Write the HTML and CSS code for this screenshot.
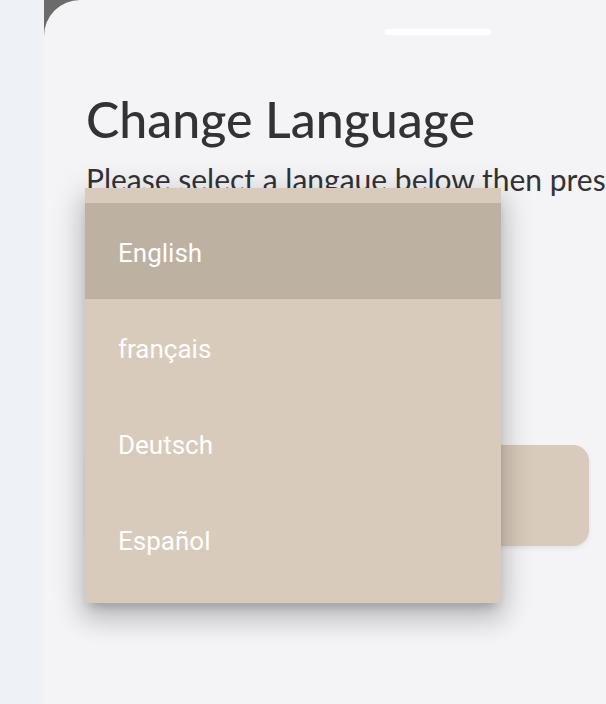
FILE: index.html
```html
<!DOCTYPE html>
<html lang="en">
<head>
    <meta charset="UTF-8">
    <meta name="viewport" content="width=device-width, initial-scale=1.0">
    <title>Change Language</title>
    <link rel="stylesheet" href="styles.css">
</head>
<body>
    <div class="frame">
        <div class="sheet">
            <div class="handle"></div>
            <h1 class="title">Change Language</h1>
            <p class="subtitle">Please select a langaue below then press continue</p>
            <div class="select-field"></div>

            <!-- 下拉菜单 -->
            <ul class="menu">
                <li class="menu-item active">English</li>
                <li class="menu-item">français</li>
                <li class="menu-item">Deutsch</li>
                <li class="menu-item">Español</li>
            </ul>
        </div>
    </div>
</body>
</html>
```

FILE: styles.css
```css
/* 通用样式重置 */
*, *:before, *:after {
    padding: 0;
    margin: 0;
    box-sizing: border-box;
}
html, body {
    height: 100%;
    width: 100%;
}
body {
    background: #eef1f6;
    overflow: hidden;
    -webkit-font-smoothing: antialiased;
}
.frame {
    margin-left: 44px;
    width: 788px;
    height: 704px;
    background: #6b6b6b;
}
.sheet {
    position: relative;
    height: 100%;
    background: #f4f4f6;
    border-top-left-radius: 36px;
    padding: 29px 0 0 42px;
    color: #333336;
    font-family: Lato, 'Noto Sans', sans-serif;
}
.handle {
    width: 106px;
    height: 6px;
    margin-left: 299px;
    border-radius: 3px;
    background: #fff;
}
.title {
    margin-top: 56px;
    font-size: 50px;
    font-weight: 500;
    line-height: 56px;
}
.subtitle {
    margin-top: 17px;
    font-size: 30px;
    line-height: 30px;
    white-space: nowrap;
}
.select-field {
    margin-top: 251px;
    width: 503px;
    height: 101px;
    border-radius: 16px;
    background: #d8cbbb;
    box-shadow: 0 2px 4px rgba(0, 0, 0, 0.08);
}
.menu {
    position: absolute;
    top: 188px;
    left: 41px;
    width: 416px;
    padding: 15px 0 16px;
    list-style: none;
    background: #d8cbbb;
    box-shadow: 0 8px 10px -5px rgba(0, 0, 0, 0.2), 0 16px 24px 2px rgba(0, 0, 0, 0.14), 0 6px 30px 5px rgba(0, 0, 0, 0.12);
    font-family: Roboto, 'Liberation Sans', sans-serif;
}
.menu-item {
    height: 96px;
    padding: 3px 0 0 33px;
    display: flex;
    align-items: center;
    font-size: 26px;
    color: #fff;
}
.menu-item.active {
    background: #bdb1a2;
}
```
